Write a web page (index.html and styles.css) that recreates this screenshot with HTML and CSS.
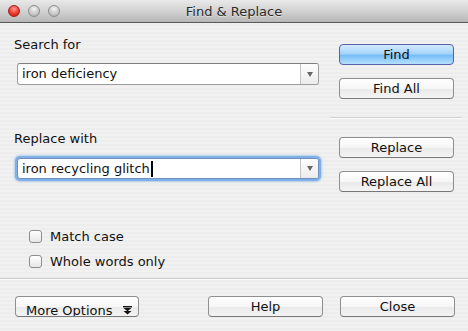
FILE: index.html
```html
<!DOCTYPE html>
<html lang="en">
<head>
    <meta charset="UTF-8">
    <title>Find &amp; Replace</title>
    <link rel="stylesheet" href="styles.css">
</head>
<body>
    <div class="window">
        <div class="titlebar">
            <div class="lights">
                <span class="light red"></span>
                <span class="light"></span>
                <span class="light"></span>
            </div>
            <div class="title">Find &amp; Replace</div>
        </div>

        <div class="main">
            <div class="left">
                <label class="label">Search for</label>
                <div class="combo">
                    <div class="combo-text">iron deficiency</div>
                    <div class="combo-arrow"><span class="tri"></span></div>
                </div>

                <label class="label label-replace">Replace with</label>
                <div class="combo focused">
                    <div class="combo-text">iron recycling glitch<span class="caret"></span></div>
                    <div class="combo-arrow"><span class="tri"></span></div>
                </div>

                <div class="checks">
                    <div class="check-row"><span class="checkbox"></span>Match case</div>
                    <div class="check-row"><span class="checkbox"></span>Whole words only</div>
                </div>
            </div>

            <div class="right">
                <button class="btn btn-default">Find</button>
                <button class="btn">Find All</button>
                <div class="sep"></div>
                <button class="btn">Replace</button>
                <button class="btn">Replace All</button>
            </div>
        </div>

        <div class="divider"></div>

        <div class="footer">
            <button class="btn btn-more">More Options
                <svg class="more-icon" width="9" height="9" viewBox="0 0 9 9">
                    <rect x="0" y="0" width="9" height="1.4" fill="#111"/>
                    <path d="M0.5 2 L8.5 2 L4.5 5.2 Z" fill="#111"/>
                    <path d="M0.5 5 L8.5 5 L4.5 8.6 Z" fill="#111"/>
                </svg>
            </button>
            <div class="footer-right">
                <button class="btn">Help</button>
                <button class="btn">Close</button>
            </div>
        </div>
    </div>
</body>
</html>
```

FILE: styles.css
```css
body {
    margin: 0;
    font-family: "DejaVu Sans", "Liberation Sans", sans-serif;
    font-size: 12.5px;
    color: #111;
}

.window {
    width: 468px;
    height: 331px;
    overflow: hidden;
    background: repeating-linear-gradient(#ededed 0 2px, #f1f1f1 2px 4px);
    display: flex;
    flex-direction: column;
}

.titlebar {
    height: 22px;
    border-bottom: 1px solid #585858;
    background: linear-gradient(#e9e9e9, #d2d2d2 50%, #b7b7b7);
    display: flex;
    align-items: center;
    position: relative;
}

.lights {
    display: flex;
    gap: 8px;
    padding-left: 8px;
}

.light {
    width: 12px;
    height: 12px;
    border-radius: 50%;
    box-sizing: border-box;
    border: 1px solid #8c8c8c;
    background: radial-gradient(circle at 50% 30%, #f4f4f4, #c6c6c6 60%, #a9a9a9);
}

.light.red {
    border-color: #a5201c;
    background: radial-gradient(circle at 50% 30%, #ff9a8f, #ee3a2c 55%, #b51a12);
}

.title {
    flex: 1;
    text-align: center;
    font-size: 13px;
    color: #2a2a2a;
    margin-right: 60px;
    text-shadow: 0 1px 0 rgba(255, 255, 255, 0.5);
}

.main {
    display: flex;
    height: 255px;
}

.left {
    width: 330px;
    padding-left: 14px;
    box-sizing: border-box;
    display: flex;
    flex-direction: column;
}

.label {
    display: block;
    margin-top: 14px;
    line-height: 16px;
    font-size: 13px;
}

.label-replace {
    margin-top: 46px;
}

.combo {
    margin-top: 10px;
    margin-left: 3px;
    width: 302px;
    height: 22px;
    box-sizing: border-box;
    background: #fff;
    border: 1px solid #9d9d9d;
    border-top-color: #7e7e7e;
    border-radius: 3px;
    display: flex;
}

.combo.focused {
    height: 21px;
    margin-top: 11px;
    box-shadow: 0 0 0 2px #7fb0e8, 0 0 2px 3px rgba(120, 170, 230, 0.5);
    border-color: #6f8fbf;
}

.combo-text {
    flex: 1;
    padding-left: 4px;
    line-height: 20px;
    font-size: 13px;
    display: flex;
    align-items: center;
}

.caret {
    display: inline-block;
    width: 2px;
    height: 16px;
    background: #000;
    margin-left: 1px;
}

.combo-arrow {
    width: 17px;
    border-left: 1px solid #c4c4c4;
    background: linear-gradient(#fdfdfd, #ececec);
    border-radius: 0 2px 2px 0;
    display: flex;
    align-items: center;
    justify-content: center;
}

.tri {
    width: 0;
    height: 0;
    border-left: 3.5px solid transparent;
    border-right: 3.5px solid transparent;
    border-top: 5px solid #666;
}

.checks {
    margin-top: 49px;
    margin-left: 15px;
    display: flex;
    flex-direction: column;
    gap: 9px;
}

.check-row {
    display: flex;
    align-items: center;
    font-size: 13px;
    height: 16px;
}

.checkbox {
    width: 13px;
    height: 13px;
    box-sizing: border-box;
    border: 1px solid #8e8e8e;
    border-radius: 3px;
    background: linear-gradient(#ffffff, #e6e6e6);
    margin-right: 8px;
}

.right {
    flex: 1;
    padding-left: 9px;
    padding-top: 21px;
    display: flex;
    flex-direction: column;
}

.btn {
    width: 115px;
    height: 21px;
    box-sizing: border-box;
    font-family: inherit;
    font-size: 13px;
    color: #111;
    border: 1px solid #8f8f8f;
    border-bottom-color: #777;
    border-radius: 4px;
    background: linear-gradient(#ffffff, #f6f6f6 50%, #e9e9e9 51%, #f4f4f4);
    padding: 0;
    line-height: 18px;
}

.right .btn + .btn {
    margin-top: 13px;
}

.btn-default {
    border-color: #5b5fa8;
    background: linear-gradient(#d4ebfd, #a5d4fb 45%, #78bdf6 55%, #b4e1ff);
}

.sep {
    height: 1px;
    margin: 18px 6px 18px -9px;
    background: #d2d2d2;
    border-bottom: 1px solid #fbfbfb;
}

.right .sep + .btn {
    margin-top: 0;
}

.divider {
    height: 1px;
    background: #cbcbcb;
    border-bottom: 1px solid #fafafa;
}

.footer {
    display: flex;
    align-items: flex-start;
    padding-top: 16px;
    padding-left: 15px;
}

.btn-more {
    width: 124px;
    text-align: left;
    padding-left: 10px;
    padding-top: 6px;
    line-height: 16px;
    overflow: hidden;
}

.more-icon {
    margin-left: 6px;
}

.footer-right {
    display: flex;
    gap: 17px;
    margin-left: 69px;
}
```
